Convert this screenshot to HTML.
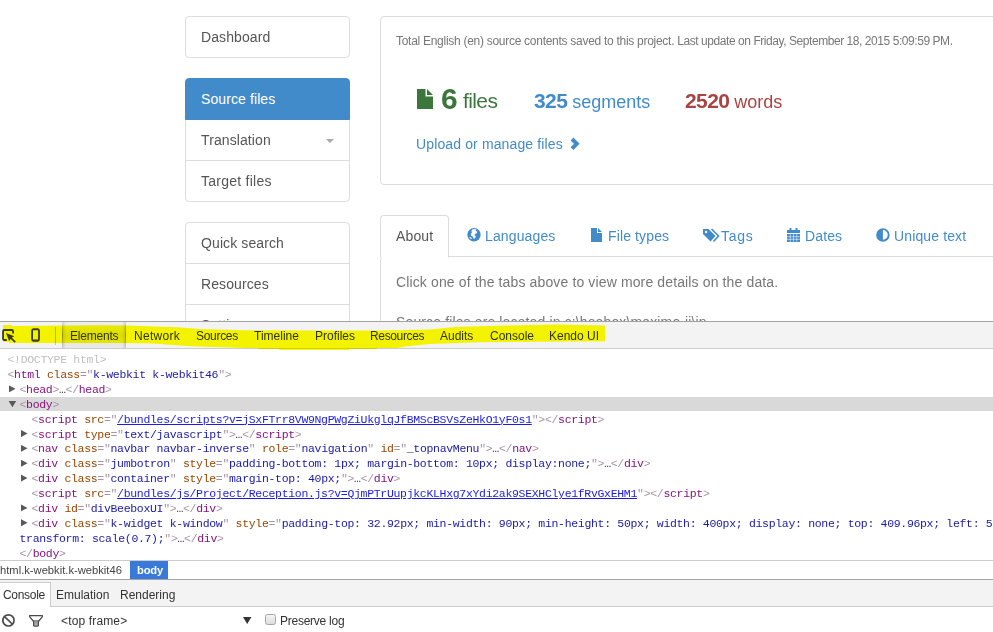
<!DOCTYPE html>
<html>
<head>
<meta charset="utf-8">
<title>Source files</title>
<style>
html,body{margin:0;padding:0;}
body{width:993px;height:632px;overflow:hidden;position:relative;background:#fff;font-family:"Liberation Sans",Arial,sans-serif;font-size:14px;color:#555;}
.abs{position:absolute;}
#page{position:absolute;left:0;top:0;width:993px;height:321px;overflow:hidden;background:#fff;}
.lg{position:absolute;left:185px;width:165px;}
.lg .it{box-sizing:border-box;height:42px;line-height:20px;padding:10px 15px;border:1px solid #ddd;margin-bottom:-1px;font-size:14px;letter-spacing:0.1px;color:#555;position:relative;background:#fff;}
.lg .it.first{border-radius:4px 4px 0 0;}
.lg .it.last{border-radius:0 0 4px 4px;}
.lg .it.first.last{border-radius:4px;}
.lg .it.act{background:#428bca;color:#fff;border-color:#428bca;z-index:2;}
.caret{position:absolute;right:15px;top:19px;width:0;height:0;border-left:4px solid transparent;border-right:4px solid transparent;border-top:4px solid #aaa;}
.panel{position:absolute;left:380px;top:16px;width:640px;height:167px;border:1px solid #ddd;border-radius:4px;}
.small{font-size:12px;line-height:20px;color:#777;letter-spacing:-0.36px;}
.tx{font-size:14px;line-height:20px;letter-spacing:0.13px;}
.st{font-size:18px;line-height:26px;}
.bn{font-size:21px;letter-spacing:-0.6px;}
.t{position:absolute;white-space:nowrap;}
#dev{position:absolute;left:0;top:321px;width:993px;height:311px;background:#fff;font-size:12px;color:#333;}
.tb{position:absolute;left:0;top:0;width:993px;height:26px;background:#f3f3f3;border-top:1px solid #a3a3a3;border-bottom:1px solid #ccc;}
.code{position:absolute;left:0;top:0;width:993px;font-family:"Liberation Mono",monospace;font-size:11.5px;letter-spacing:-0.32px;line-height:15px;white-space:pre;color:#222;}
.ln{position:absolute;height:15px;line-height:15px;white-space:pre;}
.ar{position:absolute;background:#595959;}
.ar.r{left:-10.800px;top:3.300px;width:6.800px;height:7.400px;clip-path:polygon(0 0,100% 50%,0 100%);}
.ar.d{left:-11.200px;top:3.800px;width:8.200px;height:6.800px;clip-path:polygon(0 0,100% 0,50% 100%);}
.tag{color:#881280;}
.br{color:#a894a6;}
.an{color:#994500;}
.av{color:#1a1aa6;}
.lk{color:#1c1ce0;text-decoration:underline;}
.el{color:#333;}
.gr{color:#c0c0c0;}
</style>
</head>
<body>
<div id="page">
  <div class="lg" style="top:16px;"><div class="it first last">Dashboard</div></div>
  <div class="lg" style="top:78px;">
    <div class="it first act">Source files</div>
    <div class="it">Translation<span class="caret"></span></div>
    <div class="it last" style="letter-spacing:0.25px">Target files</div>
  </div>
  <div class="lg" style="top:222px;">
    <div class="it first">Quick search</div>
    <div class="it">Resources</div>
    <div class="it">Settings</div>
  </div>

  <div class="panel"></div>
  <div class="t small" style="left:396px;top:31px;"><span style="letter-spacing:-0.28px">Total English (en) source contents saved to this project. </span><span style="letter-spacing:-0.44px">Last update on Friday, September 18, 2015 5:09:59 PM.</span></div>

  <svg class="abs" style="left:417px;top:89px;" width="16" height="20" viewBox="0 0 16 20"><path d="M0 0h8.5v7.5h7.5v12.5H0z M10 0l6 6h-6z" fill="#3c763d"/></svg>
  <div class="t" style="left:441px;top:82px;font-size:30px;letter-spacing:-1px;font-weight:bold;color:#3c763d;line-height:34px;">6</div>
  <div class="t st" style="left:463px;top:88px;color:#3c763d;"><span class="bn" style="font-weight:normal">files</span></div>
  <div class="t st" style="left:534px;top:88px;color:#428bca;"><b class="bn">325</b> segments</div>
  <div class="t st" style="left:685px;top:88px;color:#a94442;"><b class="bn">2520</b> words</div>
  <div class="t tx" style="left:416px;top:134px;color:#428bca;">Upload or manage files</div>
  <svg class="abs" style="left:568.800px;top:136.700px;" width="13" height="14" viewBox="0 0 13 14"><path d="M3 2l4.800 4.800-4.800 4.800" fill="none" stroke="#428bca" stroke-width="4"/></svg>

  <!-- tabs -->
  <div class="abs" style="left:380px;top:256px;width:640px;height:1px;background:#ddd;"></div>
  <div class="abs" style="left:380px;top:215px;width:67px;height:41px;border:1px solid #ddd;border-bottom:1px solid #fff;border-radius:4px 4px 0 0;background:#fff;"></div>
  <div class="abs" style="left:380px;top:257px;width:640px;height:80px;border-left:1px solid #ddd;border-radius:4px 0 0 0;"></div>
  <div class="t tx" style="left:396px;top:226px;color:#555;">About</div>
  <svg class="abs" style="left:467.200px;top:228.200px;" width="14" height="14" viewBox="0 0 14 14"><circle cx="7" cy="6.800" r="6.700" fill="#428bca"/><path d="M5.200 1.600q2-1 4.200-.2l-.8 1.600 1.600.6-.4 1.800-1.800.4-.6 1.400 1.400.8-.4 1.800-1.600 1.200-.8-2.200-1.800-1-.4-2 1.200-1.200-.6-1.400z" fill="#fff"/><path d="M2.200 8.800l2 .6.600 1.400-1 .4z" fill="#fff"/></svg>
  <div class="t tx" style="left:485px;top:226px;color:#428bca;">Languages</div>
  <svg class="abs" style="left:591px;top:228px;" width="11" height="14" viewBox="0 0 11 14"><path d="M0 0h6v5h5v9H0z M7 0l4 4H7z" fill="#428bca"/></svg>
  <div class="t tx" style="left:608px;top:226px;color:#428bca;">File types</div>
  <svg class="abs" style="left:703px;top:228px;" width="18" height="14" viewBox="0 0 18 14"><path d="M0 1h5.500l7 7-5 5.500-7.500-7.500z" fill="#428bca"/><path d="M8.500 1l7 7-5 5.500" fill="none" stroke="#428bca" stroke-width="1.600"/><circle cx="3" cy="4" r="1.200" fill="#fff"/></svg>
  <div class="t tx" style="left:721px;top:226px;color:#428bca;letter-spacing:0.7px;">Tags</div>
  <svg class="abs" style="left:787px;top:228px;" width="13" height="14" viewBox="0 0 13 14"><path d="M0 2h13v3H0z M2.500 0h2v3h-2z M8.500 0h2v3h-2z" fill="#428bca"/><path d="M0 6h13v8H0z" fill="#428bca"/><path d="M3.250 6v8 M6.500 6v8 M9.750 6v8 M0 8.700h13 M0 11.300h13" stroke="#fff" stroke-width=".55"/></svg>
  <div class="t tx" style="left:805px;top:226px;color:#428bca;">Dates</div>
  <svg class="abs" style="left:876.200px;top:228.200px;" width="14" height="14" viewBox="0 0 14 14"><circle cx="6.900" cy="6.900" r="5.800" fill="#fff" stroke="#428bca" stroke-width="1.900"/><path d="M6.900 1.200a5.700 5.700 0 0 0 0 11.400z" fill="#428bca"/></svg>
  <div class="t tx" style="left:894px;top:226px;color:#428bca;">Unique text</div>
  <div class="t tx" style="left:396px;top:272px;color:#777;">Click one of the tabs above to view more details on the data.</div>
  <div class="t tx" style="left:396px;top:312px;color:#777;">Source files are located in c:\beebox\maxime-ii\in</div>
</div>

<div id="dev">
  <div class="tb"></div>
  <div class="abs" style="left:62px;top:1px;width:64px;height:26px;background:linear-gradient(to bottom,#efefef 0%,#dddddd 50%,#ebebeb 100%);"></div>
  <div class="abs" style="left:62px;top:1px;width:1px;height:26px;background:linear-gradient(to bottom,#d8d8d8 0%,#8e8e8e 50%,#d0d0d0 100%);"></div>
  <div class="abs" style="left:125px;top:1px;width:1px;height:26px;background:linear-gradient(to bottom,#d8d8d8 0%,#8e8e8e 50%,#d0d0d0 100%);"></div>
  <div class="abs" style="left:63px;top:1px;width:3px;height:26px;background:linear-gradient(to right,rgba(0,0,0,0.10),rgba(0,0,0,0));"></div>
  <div class="abs" style="left:122px;top:1px;width:3px;height:26px;background:linear-gradient(to left,rgba(0,0,0,0.10),rgba(0,0,0,0));"></div>
  <div class="abs" style="left:55px;top:6px;width:1px;height:18px;background:#bbb;"></div>
  <svg class="abs" style="left:0;top:1px;" width="48" height="26" viewBox="0 322 48 26"><path d="M6.800 340h-2.400q-1.400 0-1.400-1.400v-7.200q0-1.400 1.400-1.400h7.300q1.400 0 1.400 1.400v2.200" fill="none" stroke="#3c3c3c" stroke-width="1.800"/><path d="M6 333.100l8.200 3.100-2.300 1.500 3.900 3.900-1.200 1.200-3.900-3.900-1.600 2.100z" fill="#3c3c3c"/><rect x="32.100" y="329.400" width="6.900" height="11.100" rx="1.300" fill="none" stroke="#3c3c3c" stroke-width="1.800"/><path d="M32.500 329.200h6.100 M32.500 340.800h6.100" stroke="#3c3c3c" stroke-width="1.400"/></svg>
  <div class="t" style="left:70px;top:7px;line-height:16px;letter-spacing:-0.2px;">Elements</div>
  <div class="t" style="left:134px;top:7px;line-height:16px;letter-spacing:0.3px;">Network</div>
  <div class="t" style="left:196px;top:7px;line-height:16px;letter-spacing:-0.3px;">Sources</div>
  <div class="t" style="left:254px;top:7px;line-height:16px;">Timeline</div>
  <div class="t" style="left:315px;top:7px;line-height:16px;">Profiles</div>
  <div class="t" style="left:370px;top:7px;line-height:16px;letter-spacing:-0.35px;">Resources</div>
  <div class="t" style="left:440px;top:7px;line-height:16px;">Audits</div>
  <div class="t" style="left:490px;top:7px;line-height:16px;">Console</div>
  <div class="t" style="left:549px;top:7px;line-height:16px;">Kendo UI</div>
  <svg class="abs" style="left:0;top:0;mix-blend-mode:multiply;" width="620" height="32" viewBox="0 321 620 32"><polygon fill="#ffff00" points="3,325 12,325 12,326 100,325.300 126,325.500 178,327.200 200,329 246,330.300 309,330.600 360,330.400 380,330.600 430,329.600 455,327.100 506,325.600 556,324.600 605,325.600 605,341.200 531,341.700 480,342.200 430,344 405,346.500 397,348 377,348 377,349 349,349 349,350 279,350 279,349 258,349 258,348 246,348 192,346.300 152,343.600 126,343 60,343 9,343 9,342 3,342"/></svg>

  <div class="abs" style="left:0;top:76px;width:993px;height:14px;background:#d9d9d9;"></div>
  <div class="code">
<div class="ln" style="top:31.10px;left:7.5px;"><span class="gr">&lt;!DOCTYPE html&gt;</span></div>
<div class="ln" style="top:45.98px;left:7.5px;"><span class="br">&lt;</span><span class="tag">html</span> <span class="an">class</span><span class="br">="</span><span class="av">k-webkit k-webkit46</span><span class="br">"</span><span class="br">&gt;</span></div>
<div class="ln" style="top:60.86px;left:19.5px;"><i class="ar r"></i><span class="br">&lt;</span><span class="tag">head</span><span class="br">&gt;</span><span class="el">…</span><span class="br">&lt;/</span><span class="tag">head</span><span class="br">&gt;</span></div>
<div class="ln" style="top:75.74px;left:19.5px;"><i class="ar d"></i><span class="br">&lt;</span><span class="tag">body</span><span class="br">&gt;</span></div>
<div class="ln" style="top:90.62px;left:31.5px;"><span class="br">&lt;</span><span class="tag">script</span> <span class="an">src</span><span class="br">="</span><span class="lk">/bundles/scripts?v=jSxFTrr8VW9NgPWgZiUkglqJfBMScBSVsZeHkO1yF0s1</span><span class="br">"</span><span class="br">&gt;</span><span class="br">&lt;/</span><span class="tag">script</span><span class="br">&gt;</span></div>
<div class="ln" style="top:105.50px;left:31.5px;"><i class="ar r"></i><span class="br">&lt;</span><span class="tag">script</span> <span class="an">type</span><span class="br">="</span><span class="av">text/javascript</span><span class="br">"</span><span class="br">&gt;</span><span class="el">…</span><span class="br">&lt;/</span><span class="tag">script</span><span class="br">&gt;</span></div>
<div class="ln" style="top:120.38px;left:31.5px;"><i class="ar r"></i><span class="br">&lt;</span><span class="tag">nav</span> <span class="an">class</span><span class="br">="</span><span class="av">navbar navbar-inverse</span><span class="br">"</span> <span class="an">role</span><span class="br">="</span><span class="av">navigation</span><span class="br">"</span> <span class="an">id</span><span class="br">="</span><span class="av">_topnavMenu</span><span class="br">"</span><span class="br">&gt;</span><span class="el">…</span><span class="br">&lt;/</span><span class="tag">nav</span><span class="br">&gt;</span></div>
<div class="ln" style="top:135.26px;left:31.5px;"><i class="ar r"></i><span class="br">&lt;</span><span class="tag">div</span> <span class="an">class</span><span class="br">="</span><span class="av">jumbotron</span><span class="br">"</span> <span class="an">style</span><span class="br">="</span><span class="av">padding-bottom: 1px; margin-bottom: 10px; display:none;</span><span class="br">"</span><span class="br">&gt;</span><span class="el">…</span><span class="br">&lt;/</span><span class="tag">div</span><span class="br">&gt;</span></div>
<div class="ln" style="top:150.14px;left:31.5px;"><i class="ar r"></i><span class="br">&lt;</span><span class="tag">div</span> <span class="an">class</span><span class="br">="</span><span class="av">container</span><span class="br">"</span> <span class="an">style</span><span class="br">="</span><span class="av">margin-top: 40px;</span><span class="br">"</span><span class="br">&gt;</span><span class="el">…</span><span class="br">&lt;/</span><span class="tag">div</span><span class="br">&gt;</span></div>
<div class="ln" style="top:165.02px;left:31.5px;"><span class="br">&lt;</span><span class="tag">script</span> <span class="an">src</span><span class="br">="</span><span class="lk">/bundles/js/Project/Reception.js?v=QjmPTrUupjkcKLHxg7xYdi2ak9SEXHClye1fRvGxEHM1</span><span class="br">"</span><span class="br">&gt;</span><span class="br">&lt;/</span><span class="tag">script</span><span class="br">&gt;</span></div>
<div class="ln" style="top:179.90px;left:31.5px;"><i class="ar r"></i><span class="br">&lt;</span><span class="tag">div</span> <span class="an">id</span><span class="br">="</span><span class="av">divBeeboxUI</span><span class="br">"</span><span class="br">&gt;</span><span class="el">…</span><span class="br">&lt;/</span><span class="tag">div</span><span class="br">&gt;</span></div>
<div class="ln" style="top:194.78px;left:31.5px;"><i class="ar r"></i><span class="br">&lt;</span><span class="tag">div</span> <span class="an">class</span><span class="br">="</span><span class="av">k-widget k-window</span><span class="br">"</span> <span class="an">style</span><span class="br">="</span><span class="av">padding-top: 32.92px; min-width: 90px; min-height: 50px; width: 400px; display: none; top: 409.96px; left: 518.2px;</span></div>
<div class="ln" style="top:209.66px;left:19.5px;"><span class="av">transform: scale(0.7);</span><span class="br">"&gt;</span><span class="el">…</span><span class="br">&lt;/</span><span class="tag">div</span><span class="br">&gt;</span></div>
<div class="ln" style="top:224.54px;left:19.5px;"><span class="br">&lt;/</span><span class="tag">body</span><span class="br">&gt;</span></div>
</div><!--endcode-->

  <div class="abs" style="left:0;top:239px;width:993px;height:18px;border-top:1px solid #ccc;border-bottom:1px solid #a3a3a3;background:#fff;"></div>
  <div class="abs" style="left:130px;top:240px;width:38px;height:18px;background:#3879d9;"></div>
  <div class="t" style="left:0;top:241px;line-height:16px;font-size:11.2px;color:#444;">html.k-webkit.k-webkit46</div>
  <div class="t" style="left:137px;top:241px;line-height:16px;font-size:11.2px;color:#fff;font-weight:bold;letter-spacing:-0.2px;">body</div>
  <div class="abs" style="left:0;top:259px;width:993px;height:26px;background:#f3f3f3;border-bottom:1px solid #ccc;"></div>
  <div class="abs" style="left:0;top:261px;width:50px;height:24px;background:#fff;border-right:1px solid #ccc;border-top:1px solid #ccc;"></div>
  <div class="t" style="left:3px;top:266px;line-height:16px;letter-spacing:-0.3px;">Console</div>
  <div class="t" style="left:56px;top:266px;line-height:16px;">Emulation</div>
  <div class="t" style="left:120px;top:266px;line-height:16px;">Rendering</div>
  <svg class="abs" style="left:0px;top:291px;" width="17" height="17" viewBox="0 0 17 17"><circle cx="8.450" cy="8.400" r="5.600" fill="none" stroke="#4a4a4a" stroke-width="1.700"/><path d="M4.500 4.700l7.800 7.300" stroke="#4a4a4a" stroke-width="1.700"/></svg>
  <svg class="abs" style="left:28px;top:293px;" width="17" height="14" viewBox="28 614 17 14"><defs><linearGradient id="fg" x1="0" y1="0" x2="0" y2="1"><stop offset="0" stop-color="#fff"/><stop offset="0.4" stop-color="#fff"/><stop offset="0.45" stop-color="#8f8f8f"/><stop offset="1" stop-color="#b5b5b5"/></linearGradient></defs><path d="M29.600 615.700h12.800v1l-4 4.800v4.200q-2.400 1.100-4.800 0v-4.200l-4-4.800z" fill="url(#fg)" stroke="#4a4a4a" stroke-width="1.200" stroke-linejoin="round"/></svg>
  <div class="t" style="left:61px;top:292px;line-height:16px;letter-spacing:0.15px;">&lt;top frame&gt;</div>
  <svg class="abs" style="left:243px;top:296px;" width="9" height="8" viewBox="0 0 9 8"><path d="M0 0h8.400l-4.200 7z" fill="#333"/></svg>
  <div class="abs" style="left:265px;top:293px;width:9px;height:9px;border:1px solid #a5a5a5;border-radius:2.500px;background:linear-gradient(#f4f4f4,#dedede);"></div>
  <div class="t" style="left:280px;top:292px;line-height:16px;letter-spacing:-0.25px;">Preserve log</div>
</div>
</body>
</html>
